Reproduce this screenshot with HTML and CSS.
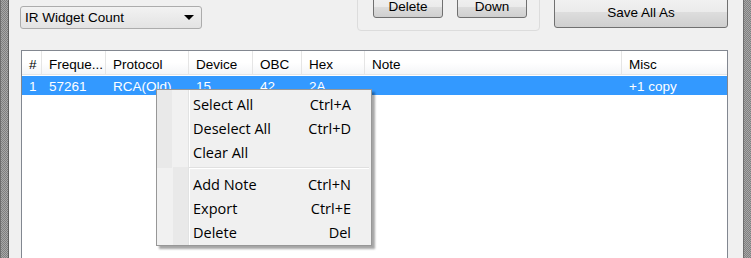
FILE: index.html
```html
<!DOCTYPE html>
<html lang="en">
<head>
  <meta charset="UTF-8">
  <title>IR Widget</title>
  <link rel="stylesheet" href="styles.css">
</head>
<body>
  <div class="window">
    <div class="frame"></div>

    <div class="client">
      <!-- Top controls -->
      <div class="toolbar">
        <div class="combo">
          <span class="combo-text">IR Widget Count</span>
          <span class="combo-arrow"></span>
        </div>
        <div class="group-box">
          <button class="btn btn-small">Delete</button>
          <button class="btn btn-small">Down</button>
        </div>
        <button class="btn btn-save">Save All As</button>
      </div>

      <!-- List view -->
      <div class="list-view">
        <div class="list-header">
          <div class="col">#</div>
          <div class="col">Freque...</div>
          <div class="col">Protocol</div>
          <div class="col">Device</div>
          <div class="col">OBC</div>
          <div class="col">Hex</div>
          <div class="col">Note</div>
          <div class="col">Misc</div>
        </div>
        <div class="list-row selected">
          <div class="cell">1</div>
          <div class="cell">57261</div>
          <div class="cell">RCA(Old)</div>
          <div class="cell">15</div>
          <div class="cell">42</div>
          <div class="cell">2A</div>
          <div class="cell"></div>
          <div class="cell">+1 copy</div>
        </div>
      </div>
    </div>

    <div class="frame"></div>
  </div>

  <!-- Context menu -->
  <div class="context-menu">
    <div class="menu-item"><span>Select All</span><span class="shortcut">Ctrl+A</span></div>
    <div class="menu-item"><span>Deselect All</span><span class="shortcut">Ctrl+D</span></div>
    <div class="menu-item"><span>Clear All</span><span class="shortcut"></span></div>
    <div class="menu-separator"></div>
    <div class="menu-item"><span>Add Note</span><span class="shortcut">Ctrl+N</span></div>
    <div class="menu-item"><span>Export</span><span class="shortcut">Ctrl+E</span></div>
    <div class="menu-item"><span>Delete</span><span class="shortcut">Del</span></div>
  </div>
</body>
</html>
```
FILE: styles.css
```css
* {
  margin: 0;
  padding: 0;
  box-sizing: border-box;
}

body {
  width: 751px;
  height: 258px;
  overflow: hidden;
  background: #f0f0f0;
  font-family: 'Liberation Sans', Arial, sans-serif;
  font-size: 13.5px;
  color: #000;
  position: relative;
}

.window {
  display: flex;
  height: 258px;
}

.frame {
  width: 9px;
  flex-shrink: 0;
  border-left: 1px solid #6e6e6e;
  border-right: 1px solid #5f5f5f;
  background: repeating-conic-gradient(#7f7f7f 0 25%, #a8a8a8 0 50%) 0 0 / 2px 2px;
}

.client {
  flex: 1;
  display: flex;
  flex-direction: column;
  padding: 0 15px 0 11px;
  background: #f0f0f0;
}

.toolbar {
  display: flex;
  align-items: flex-start;
  height: 31px;
}

.combo {
  display: flex;
  align-items: center;
  justify-content: space-between;
  width: 182px;
  height: 23px;
  margin-top: 6px;
  padding: 0 7px 0 4px;
  border: 1px solid #acacac;
  border-radius: 3px;
  background: linear-gradient(#f2f2f2, #e3e3e3);
}

.combo-arrow {
  width: 0;
  height: 0;
  border-left: 5px solid transparent;
  border-right: 5px solid transparent;
  border-top: 5px solid #000;
}

.group-box {
  display: flex;
  gap: 14px;
  width: 183px;
  height: 41px;
  margin-top: -10px;
  margin-left: 155px;
  padding: 0 0 0 15px;
  border: 1px solid #dcdcdc;
  border-radius: 4px;
}

.btn {
  font-family: 'Liberation Sans', Arial, sans-serif;
  font-size: 13.5px;
  color: #000;
  border: 1px solid #707070;
  border-radius: 3px;
  background: linear-gradient(#f2f2f2 0%, #ebebeb 50%, #dddddd 51%, #cfcfcf 100%);
}

.btn-small {
  width: 70px;
  height: 23px;
  margin-top: 4px;
}

.btn-save {
  width: 174px;
  height: 32px;
  margin-top: -4px;
  margin-left: 14px;
}

.list-view {
  flex: 1;
  margin-top: 19px;
  margin-left: 1px;
  border: 1px solid #828790;
  border-bottom: none;
  background: #fff;
  overflow: hidden;
}

.list-header,
.list-row {
  display: grid;
  grid-template-columns: 20px 64px 83px 64px 49px 63px 257px 1fr;
}

.list-header {
  height: 24px;
  border-bottom: 1px solid #e5e5e5;
  background: linear-gradient(#ffffff 0%, #ffffff 50%, #f4f5f7 100%);
}

.col {
  display: flex;
  align-items: center;
  padding: 3px 0 0 7px;
  border-right: 1px solid #e5e5e5;
}

.col:last-child {
  border-right: none;
}

.list-row {
  height: 19px;
  margin-top: 1px;
}

.list-row.selected {
  background: #3399ff;
  color: #fff;
}

.cell {
  display: flex;
  align-items: center;
  padding: 1px 0 0 7px;
  white-space: nowrap;
}

.context-menu {
  position: absolute;
  left: 156px;
  top: 89px;
  width: 216px;
  padding: 2px 2px 1px 0;
  border: 1px solid #979797;
  background:
    linear-gradient(90deg, transparent 31px, #e2e3e3 31px, #e2e3e3 32px, #ffffff 32px, #ffffff 33px, transparent 33px),
    repeating-conic-gradient(#f1f1f1 0 25%, #e9e9e9 0 50%) 0 0 / 2px 2px no-repeat,
    #f0f0f0;
  background-size: 100% 100%, 31px 100%, auto;
  box-shadow: 3px 3px 2px rgba(0, 0, 0, 0.35);
  font-family: 'Open Sans', 'Segoe UI', sans-serif;
  font-size: 14.5px;
}

.menu-item {
  display: flex;
  justify-content: space-between;
  align-items: center;
  height: 24px;
  padding: 0 18px 0 36px;
}

.menu-separator {
  height: 1px;
  margin: 3px 0 3px 32px;
  border-top: 1px solid #e0e0e0;
  border-bottom: 1px solid #ffffff;
}
```
